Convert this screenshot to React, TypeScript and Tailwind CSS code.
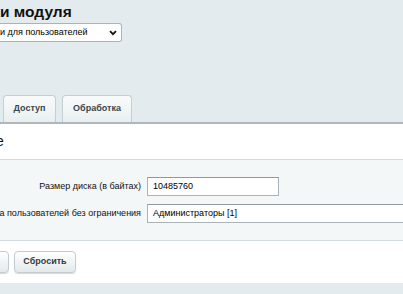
import React from "react";

function Cut({ hidden }: { hidden: string }) {
  return (
    <span className="flex w-0 justify-end">
      <span className="shrink-0 whitespace-pre">{hidden}</span>
    </span>
  );
}

export default function App() {
  return (
    <div
      className="relative h-[294px] w-[403px] overflow-hidden bg-[#e4ebee] text-black"
      style={{ fontFamily: '"Liberation Sans", Arial, sans-serif' }}
    >
      <div className="pt-[2px]">
        <h1 className="flex whitespace-nowrap text-[15.5px] font-bold leading-[20px] text-[#111]">
          <Cut hidden="Настройк" />
          и модуля
        </h1>
        <div className="mt-[1px] flex h-[19px] w-[122px] items-center rounded-r-[3px] border border-l-0 border-[#a9b3b8] bg-white pr-[4px] text-[9px] text-black">
          <span className="flex flex-1 whitespace-nowrap">
            <Cut hidden="Настройк" />
            и для пользователей
          </span>
          <svg width="8" height="6" viewBox="0 0 8 6" className="shrink-0">
            <path d="M1 1.2 L4 4.2 L7 1.2" stroke="#111" strokeWidth="1.8" fill="none" />
          </svg>
        </div>
      </div>

      <div className="mt-[52px] flex h-[28px] items-end gap-[6px]">
        <div className="-ml-[64px] h-[27px] w-[61px] rounded-t-[4px] border border-b-0 border-[#c5ced2] bg-gradient-to-b from-[#f9fbfb] to-[#e9eff1]" />
        <div className="flex h-[27px] w-[53px] items-center justify-center rounded-t-[4px] border border-b-0 border-[#c5ced2] bg-gradient-to-b from-[#f9fbfb] to-[#e9eff1] text-[9px] font-bold text-[#3c474d]">
          Доступ
        </div>
        <div className="flex h-[27px] w-[70px] items-center justify-center rounded-t-[4px] border border-b-0 border-[#c5ced2] bg-gradient-to-b from-[#f9fbfb] to-[#e9eff1] text-[9px] font-bold text-[#3c474d]">
          Обработка
        </div>
      </div>

      <div className="border-t-2 border-[#aeb8bc] bg-white">
        <div className="flex h-[36px] items-center border-b border-[#d3dadd] text-[14px] text-[#111]">
          <span className="-ml-[4px] flex whitespace-nowrap">
            <Cut hidden="Общи" />е
          </span>
        </div>
        <div className="flex flex-col gap-[8px] bg-[#f3f7f8] pb-[17px] pt-[17px]">
          <div className="flex items-center gap-[6px]">
            <div className="flex w-[141px] shrink-0 justify-end text-[9px] text-[#111]">
              <span className="shrink-0 whitespace-nowrap">Размер диска (в байтах)</span>
            </div>
            <div className="flex h-[19px] w-[132px] items-center border border-[#a9b3b8] border-t-[#8e999e] bg-white px-[5px] text-[9px] text-black">
              10485760
            </div>
          </div>
          <div className="flex items-center gap-[6px]">
            <div className="flex w-[141px] shrink-0 justify-end text-[9px] text-[#111]">
              <span className="shrink-0 whitespace-nowrap">Группа пользователей без ограничения</span>
            </div>
            <div className="flex h-[19px] w-[300px] shrink-0 items-center border border-[#a9b3b8] border-t-[#8e999e] bg-white px-[5px] text-[9px] text-black">
              Администраторы [1]
            </div>
          </div>
        </div>
        <div className="flex h-[43px] items-start gap-[5px] border-t border-[#d3dadd] pt-[10px]">
          <div className="-ml-[60px] h-[22px] w-[69px] rounded-[4px] border border-[#c4ccd0] bg-gradient-to-b from-[#ffffff] to-[#e3e9eb] shadow-[0_1px_1px_rgba(0,0,0,0.15)]" />
          <div className="flex h-[22px] w-[62px] items-center justify-center rounded-[4px] border border-[#c4ccd0] bg-gradient-to-b from-[#ffffff] to-[#e3e9eb] text-[9px] font-bold text-[#333d42] shadow-[0_1px_1px_rgba(0,0,0,0.15)]">
            Сбросить
          </div>
        </div>
      </div>
    </div>
  );
}
